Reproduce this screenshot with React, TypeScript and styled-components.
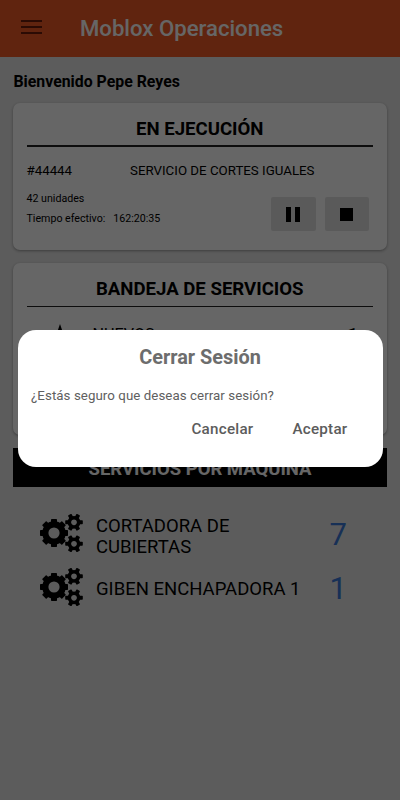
import React from "react";
import styled, { createGlobalStyle } from "styled-components";

const GlobalStyle = createGlobalStyle`
  * { box-sizing: border-box; }
  body { margin: 0; background: #e6e6e6; font-family: Roboto, "Liberation Sans", sans-serif; color: #000; }
`;

const Screen = styled.div`
  height: 800px;
  overflow: hidden;
  background: #e6e6e6;
`;

const Header = styled.header`
  display: flex;
  align-items: center;
  height: 57px;
  padding-left: 21px;
  background: #f15a26;
`;

const MenuIcon = styled.svg`
  width: 21px;
  height: 16px;
  margin-top: -3px;
`;

const AppTitle = styled.h1`
  margin: -2px 0 0 38px;
  font-size: 22.15px;
  font-weight: 500;
  line-height: 26px;
  color: #fff;
  white-space: nowrap;
`;

const Content = styled.main`
  padding: 0 13px;
`;

const Welcome = styled.p`
  margin: 0;
  padding: 15px 0 11px 0.5px;
  font-size: 15.85px;
  font-weight: 700;
  line-height: 20px;
`;

const Card = styled.section<{ $height: number }>`
  height: ${(p) => p.$height}px;
  margin-bottom: 13px;
  padding: 14px 14px 0 13.5px;
  border-radius: 7px;
  background: #fff;
  box-shadow: 0 1px 3px rgba(0, 0, 0, 0.35);
`;

const CardTitle = styled.h2<{ $rule: number }>`
  height: 30px;
  margin: 0;
  border-bottom: ${(p) => p.$rule}px solid #222;
  font-size: 18.6px;
  font-weight: 700;
  line-height: 24px;
  text-align: center;
`;

const JobRow = styled.div`
  display: flex;
  margin-top: 15px;
  line-height: 18px;
  white-space: nowrap;
`;

const JobNumber = styled.span`
  width: 103.5px;
  font-size: 13.3px;
`;

const JobName = styled.span`
  font-size: 13.3px;
`;

const JobFooter = styled.div`
  display: flex;
  justify-content: space-between;
  margin-top: 9px;
`;

const JobFacts = styled.div`
  font-size: 10.65px;
  line-height: 20px;
  white-space: nowrap;
`;

const Elapsed = styled.span`
  margin-left: 8px;
`;

const Actions = styled.div`
  display: flex;
  gap: 9px;
  margin: 8px 4px 0 0;
`;

const ActionButton = styled.button`
  display: flex;
  align-items: center;
  justify-content: center;
  width: 44.5px;
  height: 34px;
  padding: 0;
  border: 0;
  border-radius: 2px;
  background: #e2e2e2;
`;

const TrayRow = styled.div`
  display: flex;
  align-items: center;
  height: 24px;
  margin-top: 15px;
  padding: 0 15px 0 23px;
  font-size: 16.2px;
`;

const TrayLabel = styled.span`
  flex: 1;
  margin-left: 23px;
`;

const TrayCount = styled.span`
  font-size: 19px;
  font-weight: 700;
`;

const MachineBanner = styled.h2`
  height: 39px;
  margin: 0;
  background: #000;
  color: #fff;
  font-size: 18.5px;
  font-weight: 700;
  line-height: 43px;
  text-align: center;
`;

const MachineList = styled.div`
  padding: 19px 26px 0;
`;

const GearsSvg = styled.svg`
  flex: none;
  width: 44px;
  height: 38px;
  margin-bottom: 1px;
`;

const MachineName = styled.span`
  flex: 1;
  margin-top: 4px;
  margin-left: 13px;
  padding-right: 26px;
  font-size: 18.5px;
  line-height: 21px;
`;

const MachineRow = styled.div`
  display: flex;
  align-items: center;
  height: 54px;

  &:first-child ${MachineName} {
    margin-top: 8px;
  }
`;

const MachineCount = styled.span`
  width: 18px;
  margin: 4px 13.5px 0 -0.5px;
  font-size: 31px;
  line-height: 36px;
  color: #3b78d8;
`;

const Overlay = styled.div`
  position: fixed;
  inset: 0;
  display: flex;
  align-items: flex-start;
  justify-content: center;
  padding-top: 330px;
  background: rgba(0, 0, 0, 0.6);
`;

const Dialog = styled.div`
  width: 365px;
  height: 137px;
  padding: 16px 13px 0;
  border-radius: 18px;
  background: #fff;
  color: #606060;
`;

const DialogTitle = styled.h2`
  margin: 0;
  font-size: 19.9px;
  font-weight: 700;
  line-height: 24px;
  text-align: center;
  color: #6d6d6d;
`;

const DialogText = styled.p`
  margin: 16px 0 0 0.5px;
  font-size: 13.3px;
  line-height: 20px;
  letter-spacing: 0.06px;
`;

const DialogActions = styled.div`
  display: flex;
  justify-content: flex-end;
  gap: 39px;
  margin: 13px 22px 0 0;
`;

const DialogButton = styled.button`
  padding: 0;
  border: 0;
  background: none;
  color: #5c5c5c;
  font: 500 15.2px/20px Roboto, sans-serif;
  letter-spacing: 0.25px;
`;

interface GearProps {
  cx: number;
  cy: number;
  body: number;
  outer: number;
  hole: number;
  tooth: number;
  teeth: number;
}

function Gear({ cx, cy, body, outer, hole, tooth, teeth }: GearProps) {
  const ring = (body + hole) / 2;
  return (
    <g transform={`translate(${cx} ${cy})`}>
      <circle r={ring} fill="none" stroke="#000" strokeWidth={body - hole} />
      {Array.from({ length: teeth }, (_, i) => (
        <rect
          key={i}
          x={ring}
          y={-tooth / 2}
          width={outer - ring}
          height={tooth}
          rx={0.7}
          transform={`rotate(${(360 / teeth) * i})`}
        />
      ))}
    </g>
  );
}

function Gears() {
  return (
    <GearsSvg viewBox="0 0 44 38">
      <Gear cx={15} cy={19} body={11.8} outer={14} hole={5.6} tooth={6} teeth={8} />
      <Gear cx={35} cy={8.3} body={6.4} outer={8.8} hole={2.9} tooth={4} teeth={6} />
      <Gear cx={35} cy={29.8} body={6.4} outer={8.8} hole={2.9} tooth={4} teeth={6} />
    </GearsSvg>
  );
}

const machines = [
  { name: "CORTADORA DE CUBIERTAS", count: 7 },
  { name: "GIBEN ENCHAPADORA 1", count: 1 },
];

export default function App() {
  return (
    <>
      <GlobalStyle />
      <Screen>
        <Header>
          <MenuIcon viewBox="0 0 21 16">
            <path d="M0 2H21M0 8H21M0 14H21" stroke="#6b1c0a" strokeWidth="2" />
          </MenuIcon>
          <AppTitle>Moblox Operaciones</AppTitle>
        </Header>
        <Content>
          <Welcome>Bienvenido Pepe Reyes</Welcome>
          <Card $height={147}>
            <CardTitle $rule={2}>EN EJECUCIÓN</CardTitle>
            <JobRow>
              <JobNumber>#44444</JobNumber>
              <JobName>SERVICIO DE CORTES IGUALES</JobName>
            </JobRow>
            <JobFooter>
              <JobFacts>
                <div>42 unidades</div>
                <div>
                  Tiempo efectivo:<Elapsed>162:20:35</Elapsed>
                </div>
              </JobFacts>
              <Actions>
                <ActionButton aria-label="Pausar">
                  <svg width="14" height="15" viewBox="0 0 14 15">
                    <path d="M0 0H5V15H0ZM9 0H14V15H9Z" />
                  </svg>
                </ActionButton>
                <ActionButton aria-label="Detener">
                  <svg width="13" height="13" viewBox="0 0 13 13">
                    <path d="M0 0H13V13H0Z" />
                  </svg>
                </ActionButton>
              </Actions>
            </JobFooter>
          </Card>
          <Card $height={172}>
            <CardTitle $rule={1}>BANDEJA DE SERVICIOS</CardTitle>
            <TrayRow>
              <svg width="20" height="20" viewBox="0 0 20 20">
                <path d="M10 0L12.4 7H20L13.9 11.5L16.2 19L10 14.5L3.8 19L6.1 11.5L0 7H7.6Z" />
              </svg>
              <TrayLabel>NUEVOS</TrayLabel>
              <TrayCount>1</TrayCount>
            </TrayRow>
          </Card>
          <MachineBanner>SERVICIOS POR MAQUINA</MachineBanner>
          <MachineList>
            {machines.map((m) => (
              <MachineRow key={m.name}>
                <Gears />
                <MachineName>{m.name}</MachineName>
                <MachineCount>{m.count}</MachineCount>
              </MachineRow>
            ))}
          </MachineList>
        </Content>
      </Screen>
      <Overlay>
        <Dialog role="dialog">
          <DialogTitle>Cerrar Sesión</DialogTitle>
          <DialogText>¿Estás seguro que deseas cerrar sesión?</DialogText>
          <DialogActions>
            <DialogButton>Cancelar</DialogButton>
            <DialogButton>Aceptar</DialogButton>
          </DialogActions>
        </Dialog>
      </Overlay>
    </>
  );
}
